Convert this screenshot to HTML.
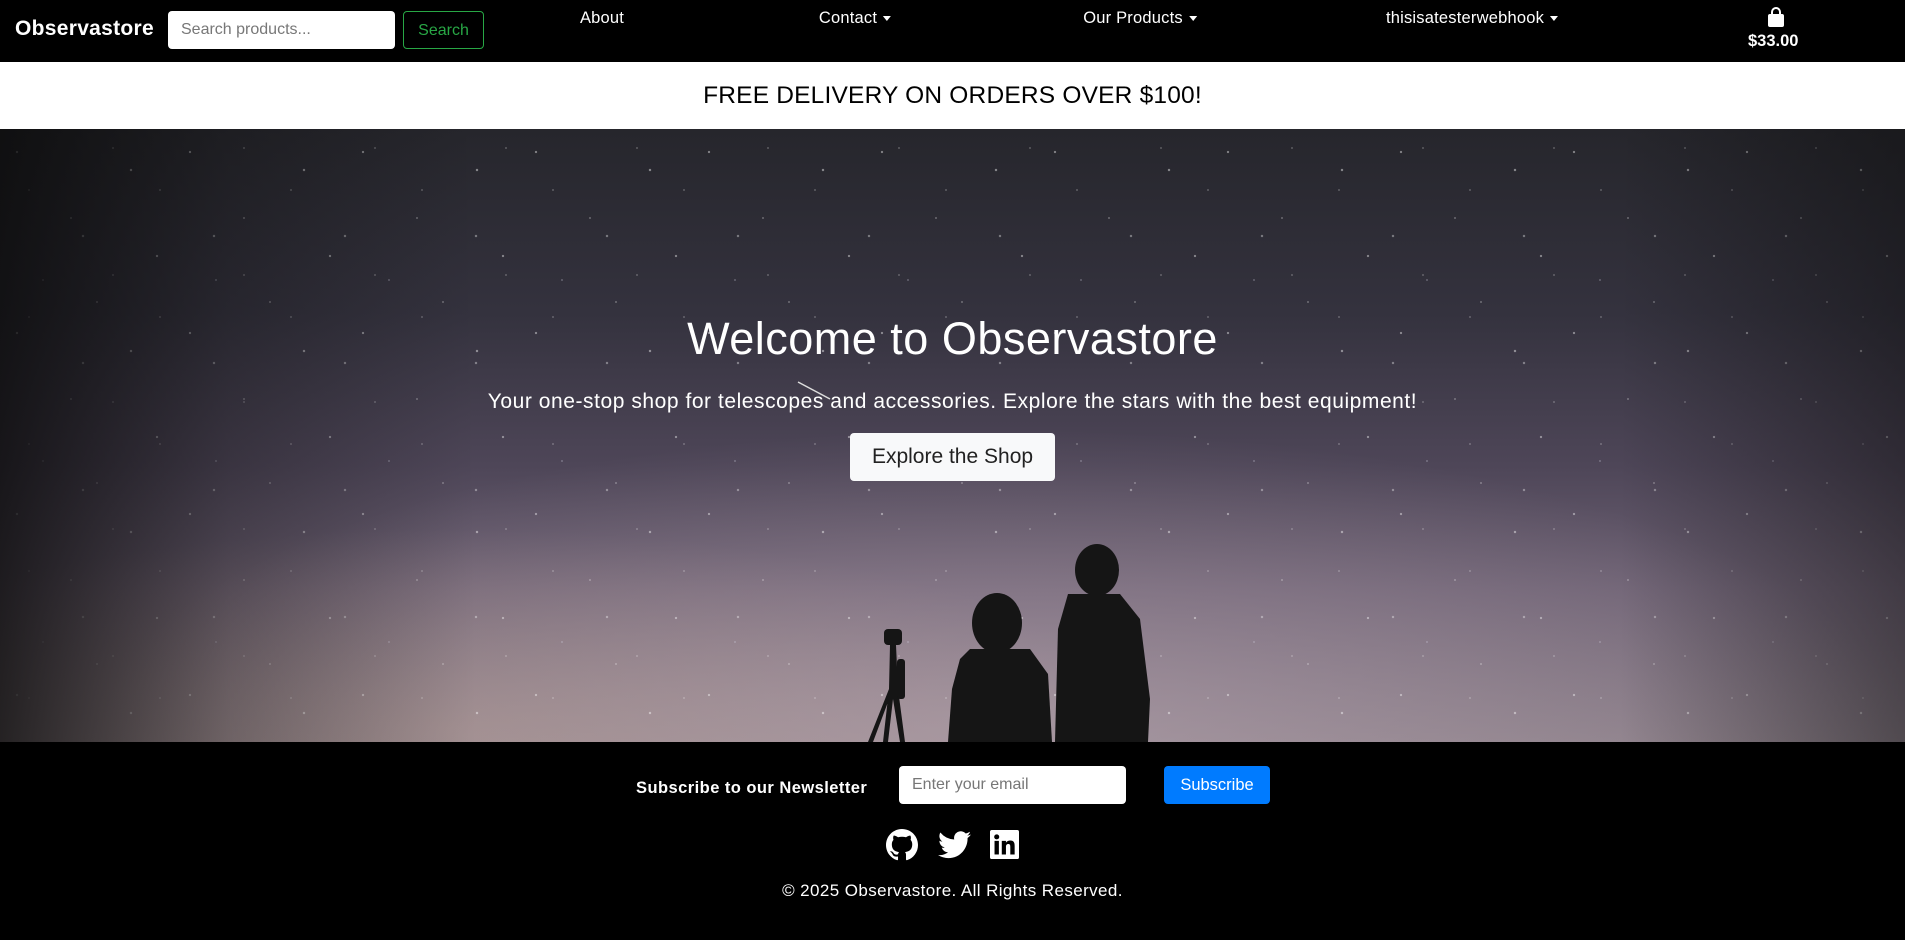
<!DOCTYPE html>
<html><head><meta charset="utf-8"><style>
*{margin:0;padding:0;box-sizing:border-box}
body{width:1905px;height:940px;overflow:hidden;font-family:"Liberation Sans",sans-serif;background:#000}
nav{position:absolute;left:0;top:0;width:1905px;height:62px;background:#000;color:#fff}
.logo{position:absolute;left:15px;top:17px;font-size:21px;font-weight:bold;letter-spacing:.3px}
.sin{position:absolute;left:168px;top:11px;width:227px;height:38px;background:#fff;border-radius:4px;color:#777;font-size:16px;padding:10px 13px}
.sbtn{position:absolute;left:403px;top:11px;width:81px;height:38px;border:1px solid #28a745;border-radius:4px;color:#28a745;font-size:16px;text-align:center;line-height:37px}
.nl{position:absolute;top:9px;font-size:16.5px;transform:translateX(-50%);white-space:nowrap;letter-spacing:.2px}
.car{display:inline-block;border-left:4px solid transparent;border-right:4px solid transparent;border-top:5px solid #fff;vertical-align:middle;margin-left:6px}
.banner{position:absolute;left:0;top:62px;width:1905px;height:67px;background:#fff;text-align:center;font-size:24.5px;line-height:67px;color:#000;box-shadow:0 2px 6px rgba(0,0,0,.15);letter-spacing:.2px}
.hero{position:absolute;left:0;top:129px;width:1905px;height:613px;overflow:hidden;
background:radial-gradient(ellipse 900px 300px at 1000px 600px,rgba(200,180,190,.45),transparent),radial-gradient(ellipse 700px 200px at 450px 600px,rgba(190,160,140,.35),transparent),linear-gradient(180deg,#26262c 0%,#34323e 30%,#4e4658 55%,#6e6274 75%,#8a7e88 100%)}
.hero .shade{position:absolute;inset:0;background:linear-gradient(90deg,rgba(10,10,10,.8) 0%,rgba(10,10,10,.3) 12%,transparent 25%,transparent 85%,rgba(10,10,10,.45) 100%)}
.stars{position:absolute;inset:0;opacity:.85;background-image:radial-gradient(1.4px 1.4px at 17px 23px,#fff,transparent),radial-gradient(1px 1px at 71px 89px,#fff,transparent),radial-gradient(1.5px 1.5px at 131px 41px,#fff,transparent),radial-gradient(1px 1px at 43px 151px,#dde,transparent),radial-gradient(1px 1px at 97px 173px,#fff,transparent),radial-gradient(1.4px 1.4px at 157px 127px,#fff,transparent);background-size:173px 181px}
.stars2{position:absolute;inset:0;opacity:.7;background-image:radial-gradient(1px 1px at 29px 61px,#fff,transparent),radial-gradient(1px 1px at 113px 19px,#fff,transparent),radial-gradient(1.5px 1.5px at 83px 107px,#fff,transparent);background-size:131px 127px}
.h1{position:absolute;top:184px;width:100%;text-align:center;color:#fff;font-size:45px;letter-spacing:.5px}
.sub{position:absolute;top:261px;width:100%;text-align:center;color:#fff;font-size:21px;letter-spacing:.55px}
.eb{position:absolute;left:850px;top:304px;width:205px;height:48px;background:#f8f9fa;border-radius:4px;color:#222;font-size:21px;text-align:center;line-height:48px}
.f1{position:absolute;left:636px;top:779px;color:#fff;font-weight:bold;font-size:16.5px;letter-spacing:.45px}
.fi{position:absolute;left:899px;top:766px;width:227px;height:38px;background:#fff;border-radius:4px;color:#777;font-size:16px;padding:10px 13px}
.fb{position:absolute;left:1164px;top:766px;width:106px;height:38px;background:#007bff;border-radius:4px;color:#fff;font-size:16.5px;text-align:center;line-height:38px}
.copy{position:absolute;top:881px;width:100%;text-align:center;color:#fff;font-size:17px;letter-spacing:.4px}
</style></head><body>
<nav>
<div class="logo">Observastore</div>
<div class="sin">Search products...</div>
<div class="sbtn">Search</div>
<div class="nl" style="left:602px">About</div>
<div class="nl" style="left:855px">Contact<span class="car"></span></div>
<div class="nl" style="left:1140px">Our Products<span class="car"></span></div>
<div class="nl" style="left:1472px">thisisatesterwebhook<span class="car"></span></div>
<svg style="position:absolute;left:1766px;top:7px" width="20" height="21" viewBox="0 0 20 21"><path d="M6 7V5a4 4 0 0 1 8 0v2" stroke="#fff" stroke-width="2" fill="none"/><rect x="2" y="7" width="16" height="13" rx="2" fill="#fff"/></svg>
<div style="position:absolute;left:1748px;top:32px;font-weight:bold;font-size:16.5px">$33.00</div>
</nav>
<div class="banner">FREE DELIVERY ON ORDERS OVER $100!</div>
<div class="hero">
<div class="stars"></div><div class="stars2"></div>
<div class="shade"></div>
<svg style="position:absolute;left:0;top:0" width="1905" height="613">
<g fill="#151515">
<ellipse cx="1097" cy="441" rx="22" ry="26"/>
<path d="M1068 465 L1120 465 L1140 490 L1150 570 L1148 613 L1055 613 L1058 500 Z"/>
<ellipse cx="997" cy="494" rx="25" ry="30"/>
<path d="M970 520 L1030 520 L1048 545 L1052 613 L948 613 L952 560 L960 530 Z"/>
<rect x="884" y="500" width="18" height="16" rx="4"/>
<path d="M890 516 L896 516 L898 560 L905 613 L900 613 L893 570 L888 613 L883 613 L889 560 Z M868 613 L889 560 L891 565 L873 613Z"/>
<rect x="897" y="530" width="8" height="40" rx="3"/>
</g>
<line x1="798" y1="253" x2="830" y2="270" stroke="#ddd" stroke-width="1.5"/>
</svg>
<div class="h1">Welcome to Observastore</div>
<div class="sub">Your one-stop shop for telescopes and accessories. Explore the stars with the best equipment!</div>
<div class="eb">Explore the Shop</div>
</div>
<div class="f1">Subscribe to our Newsletter</div>
<div class="fi">Enter your email</div>
<div class="fb">Subscribe</div>
<svg style="position:absolute;left:886px;top:829px" width="32" height="32" viewBox="0 0 16 16"><path fill="#fff" d="M8 0C3.58 0 0 3.580 0 8c0 3.54 2.290 6.530 5.470 7.590.4.07.55-.17.55-.38 0-.19-.01-.82-.01-1.490-2.010.37-2.530-.49-2.690-.94-.09-.23-.48-.94-.82-1.130-.28-.15-.68-.52-.01-.53.63-.01 1.080.58 1.230.82.72 1.210 1.870.87 2.330.66.07-.52.28-.87.51-1.070-1.780-.2-3.640-.89-3.640-3.950 0-.87.31-1.590.82-2.150-.08-.2-.36-1.020.08-2.120 0 0 .67-.21 2.200.82.64-.18 1.320-.27 2-.27.68 0 1.360.09 2 .27 1.530-1.040 2.200-.82 2.200-.82.44 1.100.16 1.920.08 2.120.51.56.82 1.270.82 2.150 0 3.070-1.870 3.750-3.650 3.950.29.25.54.73.54 1.480 0 1.070-.01 1.930-.01 2.200 0 .21.15.46.55.38A8.013 8.013 0 0 0 16 8c0-4.420-3.580-8-8-8z"/></svg>
<svg style="position:absolute;left:938px;top:831px" width="33" height="28" viewBox="0 0 24 20"><path fill="#fff" d="M24 2.4a9.8 9.8 0 0 1-2.8.8A4.9 4.9 0 0 0 23.3.4a9.9 9.9 0 0 1-3.1 1.2A4.9 4.9 0 0 0 11.8 6 14 14 0 0 1 1.7.9a4.9 4.9 0 0 0 1.5 6.6A4.9 4.9 0 0 1 1 6.9 4.9 4.9 0 0 0 4.9 11.8a4.9 4.9 0 0 1-2.2.1 4.9 4.9 0 0 0 4.6 3.4A9.9 9.9 0 0 1 0 17.3 14 14 0 0 0 7.5 19.5c9.1 0 14-7.5 14-14v-.6A10 10 0 0 0 24 2.4z"/></svg>
<svg style="position:absolute;left:990px;top:830px" width="29" height="29" viewBox="0 0 16 16"><rect width="16" height="16" rx="1" fill="#fff"/><g fill="#000"><rect x="2.5" y="6" width="2.4" height="7.5"/><circle cx="3.7" cy="3.8" r="1.4"/><path d="M6.5 6h2.3v1c.4-.7 1.3-1.2 2.4-1.2 2 0 2.4 1.3 2.4 3v4.7h-2.4V9.4c0-1-.1-1.7-1.1-1.7s-1.3.7-1.3 1.7v4.1H6.5z"/></g></svg>
<div class="copy">© 2025 Observastore. All Rights Reserved.</div>
</body></html>
